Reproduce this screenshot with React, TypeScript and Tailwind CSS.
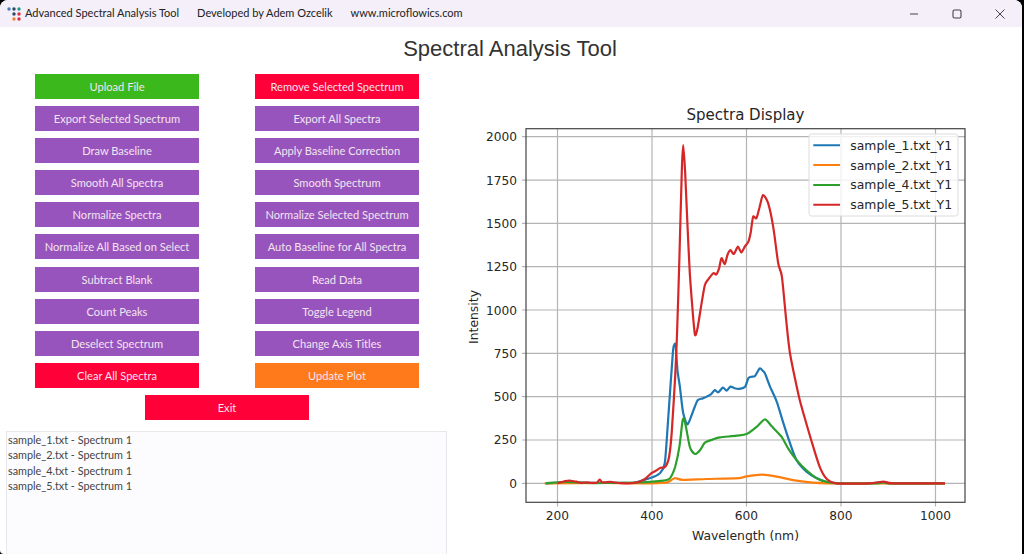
const purple = "bg-[#9854bd]";
const red = "bg-[#ff0038]";

type Btn = { label: string; color: string };

const rows: [Btn, Btn][] = [
  [{ label: "Upload File", color: "bg-[#3bb91c]" }, { label: "Remove Selected Spectrum", color: red }],
  [{ label: "Export Selected Spectrum", color: purple }, { label: "Export All Spectra", color: purple }],
  [{ label: "Draw Baseline", color: purple }, { label: "Apply Baseline Correction", color: purple }],
  [{ label: "Smooth All Spectra", color: purple }, { label: "Smooth Spectrum", color: purple }],
  [{ label: "Normalize Spectra", color: purple }, { label: "Normalize Selected Spectrum", color: purple }],
  [{ label: "Normalize All Based on Select", color: purple }, { label: "Auto Baseline for All Spectra", color: purple }],
  [{ label: "Subtract Blank", color: purple }, { label: "Read Data", color: purple }],
  [{ label: "Count Peaks", color: purple }, { label: "Toggle Legend", color: purple }],
  [{ label: "Deselect Spectrum", color: purple }, { label: "Change Axis Titles", color: purple }],
  [{ label: "Clear All Spectra", color: red }, { label: "Update Plot", color: "bg-[#ff7a1a]" }],
];

const files = ["sample_1.txt", "sample_2.txt", "sample_4.txt", "sample_5.txt"];

function ActionButton({ label, color }: Btn) {
  return (
    <button className={`${color} h-[25px] w-[164px] shrink-0 text-center text-[11.1px] leading-[25px] text-[#f3e4f0]`}>
      {label}
    </button>
  );
}

// chart coordinates, taken from the tick positions
const px = (w: number) => 557.5 + (w - 200) * 0.4725;
const py = (v: number) => 483.3 - v * 0.1733;

// catmull-rom through the points, so the traces don't look polygonal
const line = (pts: number[][]) => {
  const p = pts.map(([w, v]) => [px(w), py(v)]);
  let d = `M${p[0][0].toFixed(1)} ${p[0][1].toFixed(1)}`;
  for (let i = 0; i < p.length - 1; i++) {
    const a = p[Math.max(i - 1, 0)];
    const b = p[i];
    const c = p[i + 1];
    const e = p[Math.min(i + 2, p.length - 1)];
    const c1x = b[0] + (c[0] - a[0]) / 8;
    const c1y = b[1] + (c[1] - a[1]) / 8;
    const c2x = c[0] - (e[0] - b[0]) / 8;
    const c2y = c[1] - (e[1] - b[1]) / 8;
    d += ` C${c1x.toFixed(1)} ${c1y.toFixed(1)} ${c2x.toFixed(1)} ${c2y.toFixed(1)} ${c[0].toFixed(1)} ${c[1].toFixed(1)}`;
  }
  return d;
};

const blue = [
  [175, 0], [220, 6], [260, 3], [320, 3], [360, 2], [374, 12], [390, 25], [402, 36], [417, 59], [427, 117], [434, 365],
  [444, 750], [447, 798], [450, 795], [454, 650], [459, 557], [466, 405], [475, 340], [484, 394], [491, 445], [497, 480],
  [507, 490], [516, 500], [525, 515], [533, 538], [540, 525], [550, 552], [558, 535], [566, 558], [575, 548], [585, 545],
  [597, 557], [604, 607], [611, 615], [618, 619], [628, 663], [634, 650], [639, 635], [650, 557], [664, 471], [678, 347],
  [692, 232], [706, 134], [727, 67], [748, 30], [770, 5], [800, 0], [860, 0], [890, 6], [910, 0], [1020, 0],
];
const orange = [
  [173, 0], [300, 2], [380, 0], [430, 4], [440, 18], [449, 30], [465, 20], [515, 25], [585, 30], [600, 40], [635, 50],
  [670, 35], [706, 15], [770, 0], [1020, 0],
];
const green = [
  [175, 0], [220, 8], [260, 2], [320, 2], [374, 5], [424, 15], [438, 30], [449, 96], [458, 211], [465, 365], [470, 350],
  [480, 211], [491, 169], [502, 192], [512, 234], [528, 252], [544, 265], [579, 275], [600, 284], [622, 327], [639, 369],
  [653, 330], [674, 269], [688, 202], [706, 134], [727, 75], [748, 30], [770, 8], [800, 0], [875, 0], [890, 6], [905, 0],
  [1020, 0],
];
const crimson = [
  [200, 0], [215, 12], [225, 16], [240, 9], [250, 3], [262, 6], [272, 3], [284, 5], [289, 22], [295, 6], [312, 8], [330, 2],
  [350, 0], [370, 6], [385, 25], [397, 55], [408, 72], [418, 90], [428, 95], [436, 150], [442, 300], [449, 620], [453, 860],
  [458, 1300], [463, 1800], [466, 1951], [470, 1800], [475, 1500], [480, 1212], [487, 961], [491, 856], [496, 890],
  [505, 1040], [512, 1144], [520, 1180], [530, 1213], [536, 1205], [542, 1240], [547, 1299], [554, 1265], [560, 1320],
  [566, 1346], [573, 1323], [582, 1365], [589, 1332], [597, 1368], [604, 1394], [609, 1450], [614, 1538], [621, 1530],
  [628, 1596], [635, 1663], [646, 1615], [657, 1472], [667, 1270], [675, 1192], [684, 942], [692, 751], [711, 500],
  [724, 370], [738, 240], [755, 95], [770, 25], [790, 0], [860, 0], [890, 10], [910, 0], [1020, 0],
];

const series = [
  { name: "sample_1.txt_Y1", color: "#1f77b4", pts: blue },
  { name: "sample_2.txt_Y1", color: "#ff7f0e", pts: orange },
  { name: "sample_4.txt_Y1", color: "#2ca02c", pts: green },
  { name: "sample_5.txt_Y1", color: "#d62728", pts: crimson },
];

const xTicks = [200, 400, 600, 800, 1000];
const yTicks = [0, 250, 500, 750, 1000, 1250, 1500, 1750, 2000];

function Chart() {
  return (
    <svg viewBox="450 97 572 457" className="h-[457px] w-[572px]" fontFamily="'DejaVu Sans', sans-serif" fill="#262626">
      <text x="745.5" y="120" fontSize="15" textAnchor="middle">Spectra Display</text>
      {xTicks.map((t) => (
        <g key={t}>
          <line x1={px(t)} x2={px(t)} y1="128.7" y2="506.5" stroke="#b4b4b4" strokeWidth="1.2" />
          <text x={px(t)} y="520" fontSize="12.2" textAnchor="middle">{t}</text>
        </g>
      ))}
      {yTicks.map((t) => (
        <g key={t}>
          <line x1="522" x2="965" y1={py(t)} y2={py(t)} stroke="#b4b4b4" strokeWidth="1.2" />
          <text x="517" y={py(t) + 4.5} fontSize="12.2" textAnchor="end">{t}</text>
        </g>
      ))}
      {series.map((s) => (
        <path key={s.name} d={line(s.pts)} fill="none" stroke={s.color} strokeWidth="2.2" strokeLinejoin="round" />
      ))}
      <rect x="526" y="128.7" width="439" height="373.6" fill="none" stroke="#444" strokeWidth="1.2" />
      <rect x="809" y="134" width="149" height="82" rx="2.5" fill="#fff" fillOpacity="0.8" stroke="#dcdcdc" />
      {series.map((s, i) => (
        <g key={s.name}>
          <line x1="813.3" x2="840" y1={145.3 + i * 19.8} y2={145.3 + i * 19.8} stroke={s.color} strokeWidth="2" />
          <text x="850.3" y={149.8 + i * 19.8} fontSize="12.4">{s.name}</text>
        </g>
      ))}
      <text x="745.5" y="540" fontSize="12.4" textAnchor="middle">Wavelength (nm)</text>
      <text transform="translate(478 317) rotate(-90)" fontSize="12.4" textAnchor="middle">Intensity</text>
    </svg>
  );
}

function Logo() {
  return (
    <svg viewBox="0 0 14 14" className="h-[14px] w-[14px] shrink-0">
      <circle cx="2" cy="2" r="1.7" fill="#3f7cc0" />
      <circle cx="7" cy="2" r="1.7" fill="#2b4a6b" />
      <circle cx="12" cy="2" r="1.7" fill="#1f9a8a" />
      <circle cx="7" cy="7" r="1.7" fill="#2b4a6b" />
      <circle cx="12" cy="7" r="1.7" fill="#d9304a" />
      <circle cx="7" cy="12" r="1.7" fill="#f08030" />
      <circle cx="12" cy="12" r="1.7" fill="#d9304a" />
    </svg>
  );
}

export default function App() {
  return (
    <div className="h-[554px] w-[1024px] overflow-hidden bg-black font-['Lato',sans-serif]">
      <div className="flex h-full w-[1022px] flex-col overflow-hidden rounded-t-lg rounded-bl-sm bg-white">
        <header className="flex h-[27px] shrink-0 items-center bg-[#f4eff8] pl-[7px] text-[11px] text-[#222]">
          <Logo />
          <span className="ml-1">Advanced Spectral Analysis Tool</span>
          <span className="ml-[18px]">Developed by Adem Ozcelik</span>
          <span className="ml-[18px]">www.microflowics.com</span>
          <div className="ml-auto flex items-center pr-[17px] text-[#444]">
            <svg viewBox="0 0 10 10" className="h-[10px] w-[10px]">
              <path d="M1 5H9" stroke="currentColor" strokeWidth="1" />
            </svg>
            <svg viewBox="0 0 10 10" className="ml-[33px] h-[10px] w-[10px]">
              <rect x="1" y="1" width="8" height="8" rx="1.5" fill="none" stroke="currentColor" strokeWidth="1.1" />
            </svg>
            <svg viewBox="0 0 10 10" className="ml-[33px] h-[10px] w-[10px]">
              <path d="M0.5 0.5L9.5 9.5M9.5 0.5L0.5 9.5" stroke="currentColor" strokeWidth="1" />
            </svg>
          </div>
        </header>

        <h1 className="mt-[7px] h-[33px] w-[1020px] shrink-0 text-center font-['Liberation_Sans',sans-serif] text-[22px] leading-[29px] text-[#333]">
          Spectral Analysis Tool
        </h1>

        <div className="flex min-h-0 flex-1">
          <div className="flex w-[450px] shrink-0 flex-col">
            <div className="ml-[35px] mt-[7px] flex w-[384px] flex-col gap-[7.1px]">
              {rows.map(([a, b]) => (
                <div key={a.label} className="flex justify-between">
                  <ActionButton {...a} />
                  <ActionButton {...b} />
                </div>
              ))}
              <div className="flex justify-center">
                <ActionButton label="Exit" color={red} />
              </div>
            </div>
            <ul className="ml-[6px] mt-[11px] h-[140px] w-[441px] shrink-0 border border-[#e8e8ec] bg-[#fcfcff] pl-[1px] text-[10.8px] leading-[15.3px] text-[#444]">
              {files.map((f) => (
                <li key={f}>{f} - Spectrum 1</li>
              ))}
            </ul>
          </div>
          <div className="min-w-0 flex-1 pt-[30px]">
            <Chart />
          </div>
        </div>
      </div>
    </div>
  );
}
